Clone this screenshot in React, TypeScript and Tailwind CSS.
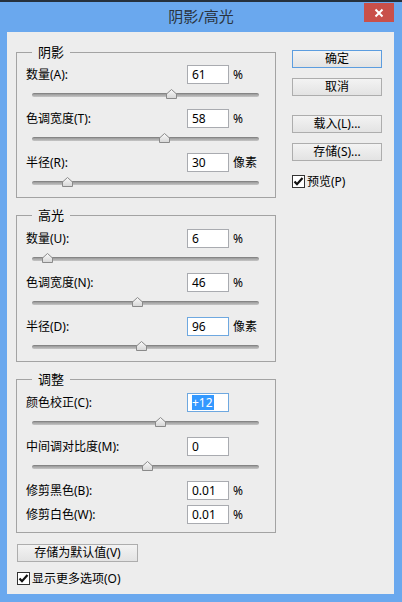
import React from "react";

type Row = {
  label: string;
  value: string;
  unit?: string;
  thumb?: number; // thumb centre, px from track start
  active?: boolean;
  selected?: boolean;
};

const font = { fontFamily: '"Noto Sans", "Noto Sans CJK SC", sans-serif' };

const shadows: Row[] = [
  { label: "数量(A):", value: "61", unit: "%", thumb: 139 },
  { label: "色调宽度(T):", value: "58", unit: "%", thumb: 132 },
  { label: "半径(R):", value: "30", unit: "像素", thumb: 35 },
];

const highlights: Row[] = [
  { label: "数量(U):", value: "6", unit: "%", thumb: 15 },
  { label: "色调宽度(N):", value: "46", unit: "%", thumb: 105 },
  { label: "半径(D):", value: "96", unit: "像素", thumb: 109, active: true },
];

const adjust: Row[] = [
  { label: "颜色校正(C):", value: "+12", thumb: 128, active: true, selected: true },
  { label: "中间调对比度(M):", value: "0", thumb: 115 },
];

const clips: Row[] = [
  { label: "修剪黑色(B):", value: "0.01", unit: "%" },
  { label: "修剪白色(W):", value: "0.01", unit: "%" },
];

function Thumb() {
  return (
    <svg width="11" height="10" viewBox="0 0 11 10">
      <defs>
        <linearGradient id="tg" x1="0" y1="0" x2="0" y2="1">
          <stop offset="0" stopColor="#fafafa" />
          <stop offset="1" stopColor="#d6d6d6" />
        </linearGradient>
      </defs>
      <polygon
        points="5.5,0.5 10.5,5 10.5,9.5 0.5,9.5 0.5,5"
        fill="url(#tg)"
        stroke="#8a8a8a"
        strokeWidth="1"
      />
    </svg>
  );
}

function Field({ row }: { row: Row }) {
  return (
    <div className="flex h-[19px] items-center pl-[9px]">
      <span className="w-[161px] text-[12px] leading-[19px] text-black">{row.label}</span>
      <div
        className={`flex h-[19px] w-[42px] items-center border bg-white pl-[4px] text-[12px] leading-[15px] text-black ${
          row.active ? "border-[#6ea8e0]" : "border-[#a9abb0]"
        }`}
      >
        {row.selected ? (
          <span className="bg-[#3399ff] pr-[1px] text-white">{row.value}</span>
        ) : (
          row.value
        )}
      </div>
      {row.unit && <span className="ml-[4px] text-[12px] leading-[19px] text-black">{row.unit}</span>}
    </div>
  );
}

function Slider({ thumb }: { thumb: number }) {
  return (
    <div className="relative ml-[15px] h-[25px] w-[227px] pt-[9px]">
      <div className="h-[4px] w-full rounded-full border-t border-[#858585] bg-gradient-to-b from-[#9a9a9a] to-[#c6c6c6]" />
      <div className="absolute top-[5px] flex" style={{ left: thumb - 5.5 }}>
        <Thumb />
      </div>
    </div>
  );
}

function Group({
  title,
  className,
  children,
}: {
  title: string;
  className?: string;
  children: React.ReactNode;
}) {
  return (
    <fieldset className={`border border-[#a3a3a3] ${className ?? ""}`}>
      <legend className="ml-[15px] px-[6px] text-[13px] leading-[16px] text-black">{title}</legend>
      {children}
    </fieldset>
  );
}

function SliderRow({ row }: { row: Row }) {
  return (
    <div>
      <Field row={row} />
      <Slider thumb={row.thumb ?? 0} />
    </div>
  );
}

function Button({ label, primary, className }: { label: string; primary?: boolean; className?: string }) {
  return (
    <div
      className={`flex h-[18px] items-center justify-center border bg-gradient-to-b from-[#f3f3f3] to-[#e3e3e3] text-[12px] leading-[16px] text-black ${
        primary ? "border-[#5c9ddf]" : "border-[#adadad]"
      } ${className ?? ""}`}
    >
      {label}
    </div>
  );
}

function Check({ label, className }: { label: string; className?: string }) {
  return (
    <div className={`flex h-[13px] items-center ${className ?? ""}`}>
      <svg width="13" height="13" viewBox="0 0 13 13">
        <rect x="0.5" y="0.5" width="12" height="12" fill="#fff" stroke="#333" />
        <path d="M2.5 6.5 L5 9.2 L10.5 3" fill="none" stroke="#111" strokeWidth="2.2" />
      </svg>
      <span className="ml-[2px] text-[12px] leading-[13px] text-black">{label}</span>
    </div>
  );
}

export default function App() {
  return (
    <div className="flex h-[602px] w-[402px] flex-col overflow-hidden bg-[#6aa8ee]" style={font}>
      <div className="h-[2px] bg-[#26313d]" />
      <div className="relative flex h-[30px] items-center justify-center">
        <span className="pb-[2px] text-[15px] text-[#2a3440]">阴影/高光</span>
        <div className="absolute right-[8px] top-[1px] flex h-[19px] w-[30px] items-center justify-center bg-[#c9504a]">
          <svg width="10" height="10" viewBox="0 0 10 10">
            <path d="M1.5 1.5 L8.5 8.5 M8.5 1.5 L1.5 8.5" stroke="#fff" strokeWidth="2" />
          </svg>
        </div>
      </div>
      <div className="ml-[7px] mr-[8px] flex h-[562px] bg-[#ededed] pl-[9px] pt-[12px]">
        <div className="flex w-[260px] flex-col">
          <Group title="阴影">
            <div className="pt-[5px]">
              {shadows.map((r) => (
                <SliderRow key={r.label} row={r} />
              ))}
            </div>
          </Group>
          <Group title="高光" className="mt-[9px]">
            <div className="pt-[6px]">
              {highlights.map((r) => (
                <SliderRow key={r.label} row={r} />
              ))}
            </div>
          </Group>
          <Group title="调整" className="mt-[9px]">
            <div className="pb-[8px] pt-[6px]">
              {adjust.map((r) => (
                <SliderRow key={r.label} row={r} />
              ))}
              <div className="flex flex-col gap-[5px]">
                {clips.map((r) => (
                  <Field key={r.label} row={r} />
                ))}
              </div>
            </div>
          </Group>
          <Button label="存储为默认值(V)" className="ml-[1px] mt-[11px] w-[121px]" />
          <Check label="显示更多选项(O)" className="ml-[1px] mt-[10px]" />
        </div>
        <div className="ml-[16px] flex w-[90px] flex-col pt-[6px]">
          <Button label="确定" primary />
          <Button label="取消" className="mt-[10px]" />
          <Button label="载入(L)..." className="mt-[19px]" />
          <Button label="存储(S)..." className="mt-[10px]" />
          <Check label="预览(P)" className="mt-[14px]" />
        </div>
      </div>
    </div>
  );
}
